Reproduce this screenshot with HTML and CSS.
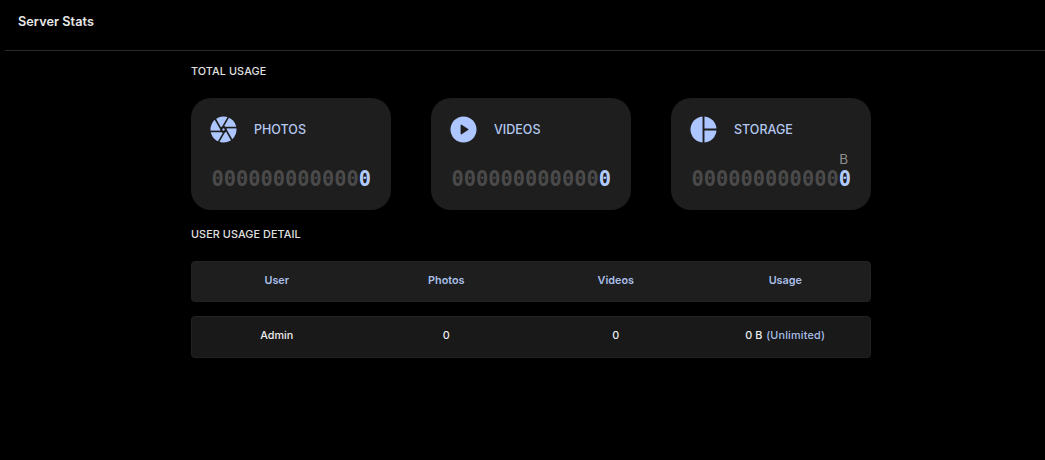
FILE: index.html
```html
<!DOCTYPE html>
<html lang="en">
<head>
<meta charset="utf-8">
<title>Server Stats</title>
<link rel="stylesheet" href="styles.css">
</head>
<body>
<header class="topbar"><h1 class="title">Server Stats</h1></header>
<main class="content">
  <h2 class="section section-total">TOTAL USAGE</h2>
  <div class="cards">
    <section class="card">
      <div class="card-head">
        <svg class="icon" viewBox="0 0 28 28"><circle cx="14" cy="14" r="13.5" fill="#adc6ff"/><g stroke="#1e1e1e" stroke-width="1.7" fill="none"><path d="M28 12H11.5"/><path d="M28 12H11.5" transform="rotate(60 14 14)"/><path d="M28 12H11.5" transform="rotate(120 14 14)"/><path d="M28 12H11.5" transform="rotate(180 14 14)"/><path d="M28 12H11.5" transform="rotate(240 14 14)"/><path d="M28 12H11.5" transform="rotate(300 14 14)"/></g></svg>
        <span class="card-label">PHOTOS</span>
      </div>
      <div class="unit"></div>
      <div class="counter"><span class="dim">000000000000</span><span class="lit">0</span></div>
    </section>
    <section class="card">
      <div class="card-head">
        <svg class="icon" viewBox="0 0 28 28"><circle cx="14" cy="14" r="13.5" fill="#adc6ff"/><path d="M11 9.6V18.4a.7.7 0 0 0 1.1.6L18.8 14.6a.7.7 0 0 0 0-1.2L12.1 9a.7.7 0 0 0-1.1.6Z" fill="#1e1e1e"/></svg>
        <span class="card-label">VIDEOS</span>
      </div>
      <div class="unit"></div>
      <div class="counter"><span class="dim">000000000000</span><span class="lit">0</span></div>
    </section>
    <section class="card">
      <div class="card-head">
        <svg class="icon" viewBox="0 0 28 28"><circle cx="14" cy="14" r="13.5" fill="#adc6ff"/><path d="M14 0V28M14 14H28" stroke="#1e1e1e" stroke-width="2" fill="none"/></svg>
        <span class="card-label">STORAGE</span>
      </div>
      <div class="unit">B</div>
      <div class="counter"><span class="dim">000000000000</span><span class="lit">0</span></div>
    </section>
  </div>
  <h2 class="section section-detail">USER USAGE DETAIL</h2>
  <div class="row row-head"><div>User</div><div>Photos</div><div>Videos</div><div>Usage</div></div>
  <div class="row row-body"><div>Admin</div><div>0</div><div>0</div><div>0 B <span class="limit">(Unlimited)</span></div></div>
</main>
</body>
</html>
```
FILE: styles.css
```css
* { box-sizing: border-box; }
html, body { margin: 0; height: 100%; background: #000; overflow: hidden; }
body { font-family: "Inter", "Noto Sans", sans-serif; color: #e6e6e6; }
.topbar { height: 51px; margin-left: 5px; border-bottom: 1px solid #2a2a2a; padding: 14px 0 0 13px; }
.title { margin: 0; font-size: 12.7px; line-height: 16px; font-weight: 600; color: #e8e8e8; letter-spacing: .05px; }
.content { width: 680px; margin-left: 191px; }
.section { margin: 0; font-size: 10.8px; line-height: 14px; font-weight: 500; color: #e0e0e0; letter-spacing: .1px; }
.section-total { padding-top: 14px; }
.cards { display: flex; gap: 40px; margin-top: 19px; }
.card { width: 200px; height: 112px; background: #1e1e1e; border-radius: 20px; padding: 18px 20px 0 19px; }
.card-head { display: flex; align-items: center; gap: 17px; height: 27px; }
.icon { width: 27px; height: 27px; flex: none; }
.card-label { font-size: 12.5px; font-weight: 500; color: #b4c8f0; }
.unit { height: 16px; margin-top: 8px; text-align: right; font-size: 13.5px; line-height: 16px; color: #8e8e8e; padding-right: 3px; }
.counter { display: flex; justify-content: flex-end; font-family: "DejaVu Sans Mono", monospace; font-size: 20.4px; line-height: 20px; font-weight: 700; margin-top: 2px; }
.dim { color: #4a4a4a; }
.lit { color: #b4cbfa; }
.section-detail { padding-top: 18px; }
.row { display: grid; grid-template-columns: repeat(4, 1fr); align-items: center; text-align: center; font-size: 10.8px; border-radius: 4px; border: 1px solid #222; padding-bottom: 2px; }
.row-head { height: 41px; margin-top: 19px; background: #1e1e1e; color: #a9bfe8; font-weight: 600; }
.row-body { height: 42px; margin-top: 14px; background: #191919; color: #ededed; font-weight: 500; padding-bottom: 4px; }
.limit { color: #a9bfe8; letter-spacing: .2px; margin-left: 1px; }
```
